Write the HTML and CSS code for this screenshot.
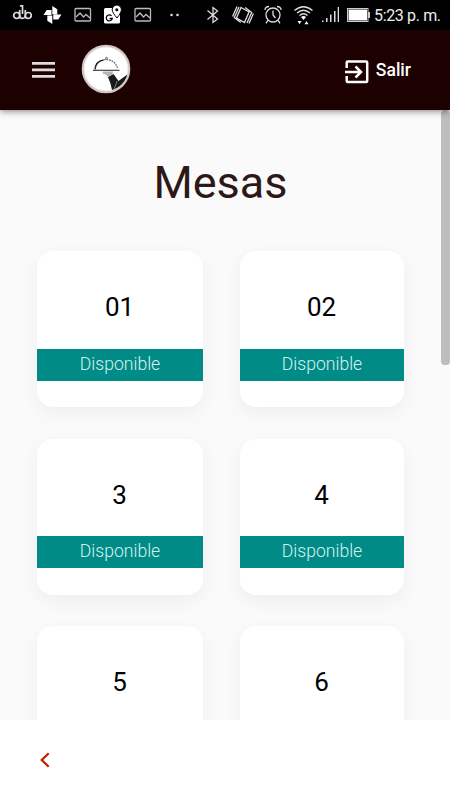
FILE: index.html
```html
<!DOCTYPE html>
<html lang="es">
<head>
<meta charset="utf-8">
<title>Mesas</title>
<link rel="stylesheet" href="styles.css">
</head>
<body>
<div class="status">
  <svg class="i-dlo" width="20" height="20" viewBox="0 0 20 20" fill="none" stroke="#ddd" stroke-width="1.700"><circle cx="4.700" cy="10.500" r="3"/><circle cx="16.300" cy="10.500" r="3"/><path d="M7.700 5v5.500a2.800 2.800 0 0 0 5.600 0V5M10.500 0v9M8 1.200l2.500-1"/></svg>
  <svg class="i-pin" width="20" height="20" viewBox="0 0 20 20" fill="#fff"><path d="M9.300 9.300V1l5 3.300v5zM10.300 9.500H18.500l-3.200 5h-5zM9.300 10.500V19l-5-3.300v-5.200zM8.500 10H.5l3.200-5h4.800z"/></svg>
  <svg class="i-img" width="18" height="16" viewBox="0 0 18 16" fill="none" stroke="#bbb" stroke-width="1.300"><rect x="1" y="1.500" width="15.500" height="12.500" rx="1"/><path d="M2 10l4-4 3.500 4 2.500-2.500 4 3.500"/></svg>
  <svg class="i-map" width="18" height="20" viewBox="0 0 18 20"><rect x="0" y="3" width="16" height="15.500" rx="1.500" fill="#fff"/><path d="M13 13Q8.200 7.500 8.200 4.700a4.600 4.600 0 0 1 9.200 0q0 2.800-4.400 8.300z" fill="#fff" stroke="#000" stroke-width="1"/><circle cx="12.800" cy="4.700" r="1.500"/><path d="M7.500 10.800a3 3 0 1 0 .7 2.700H5.500" fill="none" stroke="#000" stroke-width="1.300"/></svg>
  <svg class="i-img2" width="18" height="16" viewBox="0 0 18 16" fill="none" stroke="#bbb" stroke-width="1.300"><rect x="1" y="1.500" width="15.500" height="12.500" rx="1"/><path d="M2 10l4-4 3.500 4 2.500-2.500 4 3.500"/></svg>
  <svg class="i-dots" width="12" height="6" viewBox="0 0 12 6" fill="#ddd"><circle cx="2.500" cy="3" r="1.300"/><circle cx="8.500" cy="3" r="1.300"/></svg>
  <svg class="i-bt" width="14" height="18" viewBox="0 0 14 18" fill="none" stroke="#ddd" stroke-width="1.300"><path d="M1.500 4.500l10 8.500L7 16.500v-15L11.500 5l-10 8.500"/></svg>
  <svg class="i-vib" width="22" height="20" viewBox="0 0 22 20" fill="none" stroke="#ddd" stroke-width="1.300"><path d="M9 2.500l8 4.500-4.500 10.500-8-4.500zM7 2L2.300 12.500l6.500 5M5 1.500L.6 11.500M15 18l4.700-10.500L13 2.500M17 18.500L21.400 8.500"/></svg>
  <svg class="i-alarm" width="18" height="20" viewBox="0 0 18 20" fill="none" stroke="#ddd" stroke-width="1.300"><circle cx="9" cy="10" r="7"/><path d="M9 5.500V10l2.500 3M1 5q0-3.500 4-3.500M17 5q0-3.500-4-3.500M3.800 15.300l-1.800 3M14.200 15.300l1.800 3"/></svg>
  <svg class="i-wifi" width="20" height="20" viewBox="0 0 20 20" fill="none" stroke="#ddd" stroke-width="1.300"><path d="M.5 5.500q9-7.500 18 0M3 8q6.500-5.500 13 0M5.500 10.500q4-3.500 8 0"/><path d="M7 12q2.500-2 5 0l-2.500 3zM3.500 16h4l-2 3.300zM10.500 19.300h4l-2-3.300z" fill="#fff" stroke="none"/></svg>
  <svg class="i-sig" width="18" height="18" viewBox="0 0 18 18" fill="#ddd"><path d="M0 14.500h1.500V16H0zM4 12h1.500v4H4zM8 8.500h1.500V16H8zM12 5h1.500v11H12zM15.700 1H17v15h-1.300z"/></svg>
  <svg class="i-bat" width="24" height="14" viewBox="0 0 24 14"><rect x=".5" y=".5" width="20.500" height="13" fill="none" stroke="#ccc"/><path d="M1.500 1.500h18.500v11H1.500z" fill="#fff"/><path d="M21 4h2v6h-2z" fill="#ccc"/></svg>
  <span class="clock">5:23 p. m.</span>
</div>
<header class="bar">
  <svg class="menu" width="24" height="18" viewBox="0 0 24 18" fill="#ddd"><path d="M0 1h23v2.700H0zM0 7.500h23v2.700H0zM0 14h23v2.700H0z"/></svg>
  <svg class="logo" width="50" height="50" viewBox="0 0 50 50"><defs><clipPath id="c"><circle cx="25" cy="25" r="22"/></clipPath></defs><circle cx="25" cy="25" r="23.300" fill="#fff" stroke="#cfc5c5" stroke-width="2"/><circle cx="25" cy="25" r="21.800" fill="none" stroke="#ddd" stroke-width=".6"/><g clip-path="url(#c)"><path d="M27 33l5.500-3 5 7L47 30v15l-16 1q-1-6-4-13z" fill="#1a1a1a"/><path d="M36 37q-1 4-3 8" fill="none" stroke="#aaa" stroke-width=".7"/></g><path d="M22 27.500h10l-.5 3-4.500 2.500-2.500-2.500-3-1z" fill="#b5b5b5"/><path d="M14 25.500Q14.500 17.500 22.500 16" fill="none" stroke="#222" stroke-width="1.300"/><path d="M22.500 16Q33 14 36.500 24" fill="none" stroke="#777" stroke-width="1.200" stroke-dasharray="2 .7"/><circle cx="25.500" cy="14.300" r="1" fill="none" stroke="#444" stroke-width=".8"/><path d="M12 26.300H38.500" stroke="#333" stroke-width="1.100"/></svg>
  <div class="exit"><svg width="24" height="24" viewBox="0 0 24 24" fill="none" stroke="#fff" stroke-width="2.500"><path d="M1.700 8V2.500q0-1 1-1h18.500q1 0 1 1v18.500q0 1-1 1H2.700q-1 0-1-1V16M0 12h15.500M10.500 6.500L16 12l-5.500 5.500"/></svg><span>Salir</span></div>
</header>
<main class="content">
  <h1>Mesas</h1>
  <div class="grid">
    <section class="card"><div class="num">01</div><div class="state">Disponible</div></section>
    <section class="card"><div class="num">02</div><div class="state">Disponible</div></section>
    <section class="card"><div class="num">3</div><div class="state">Disponible</div></section>
    <section class="card"><div class="num">4</div><div class="state">Disponible</div></section>
    <section class="card"><div class="num">5</div></section>
    <section class="card"><div class="num">6</div></section>
  </div>
  <div class="thumb"></div>
</main>
<footer class="foot"><svg width="12" height="16" viewBox="0 0 12 16" fill="none" stroke="#bd2100" stroke-width="2.200"><path d="M9.700 1.300L2.700 8l7 6.700"/></svg></footer>
</body>
</html>
```
FILE: styles.css
```css
* { box-sizing: border-box; }
body {
  margin: 0;
  width: 450px;
  height: 800px;
  overflow: hidden;
  display: flex;
  flex-direction: column;
  font-family: Roboto, "Liberation Sans", sans-serif;
  background: #fff;
}
svg { display: block; flex: none; }
.status {
  height: 30px;
  flex: none;
  background: #000;
  display: flex;
  align-items: center;
  padding-left: 12px;
}
.i-pin { margin-left: 11px; }
.i-img { margin-left: 11px; }
.i-map { margin-left: 12px; }
.i-img2 { margin-left: 12px; }
.i-dots { margin-left: 17px; }
.i-bt { margin-left: 25px; }
.i-vib { margin-left: 12px; }
.i-alarm { margin-left: 10px; }
.i-wifi { margin-left: 12px; }
.i-sig { margin-left: 8px; }
.i-bat { margin-left: 7px; }
.clock {
  margin-left: 3px;
  color: #eee;
  font-size: 16px;
  letter-spacing: -.35px;
  white-space: nowrap;
}
.bar {
  height: 80px;
  flex: none;
  background: #1d0000;
  display: flex;
  align-items: center;
  padding: 0 39px 0 32px;
  box-shadow: 0 1px 7px rgba(0, 0, 0, .5);
  z-index: 1;
}
.logo { margin: -2px 0 0 25px; }
.exit {
  margin-left: auto;
  display: flex;
  align-items: center;
  gap: 7px;
  color: #fff;
  font-size: 17.5px;
  font-weight: 500;
}
.exit svg { margin-top: 3px; }
.content {
  height: 610px;
  flex: none;
  overflow: hidden;
  position: relative;
  background: #fafafa;
  padding: 43px 46px 0 37px;
}
h1 {
  margin: 0;
  height: 98px;
  font-size: 45px;
  line-height: 60px;
  font-weight: 400;
  color: #2d1717;
  text-align: center;
}
.grid {
  display: grid;
  grid-template-columns: 166px 164px;
  column-gap: 37px;
  row-gap: 31.5px;
}
.card {
  height: 156px;
  background: #fff;
  border-radius: 16px;
  box-shadow: 0 6px 20px rgba(0, 0, 0, .05);
  text-align: center;
}
.num {
  height: 97.6px;
  padding-top: 37px;
  padding-right: 1px;
  font-size: 26px;
  line-height: 38px;
  letter-spacing: -.2px;
  color: #000;
}
.state {
  height: 32.3px;
  background: #008b87;
  color: #d8f1ef;
  font-size: 17.6px;
  font-weight: 300;
  line-height: 30.5px;
}
.thumb {
  position: absolute;
  right: 0;
  top: 0;
  width: 9px;
  height: 255px;
  border-radius: 4px;
  background: #bdbdbd;
}
.foot {
  height: 80px;
  flex: none;
  display: flex;
  align-items: center;
  padding-left: 39px;
}
```
